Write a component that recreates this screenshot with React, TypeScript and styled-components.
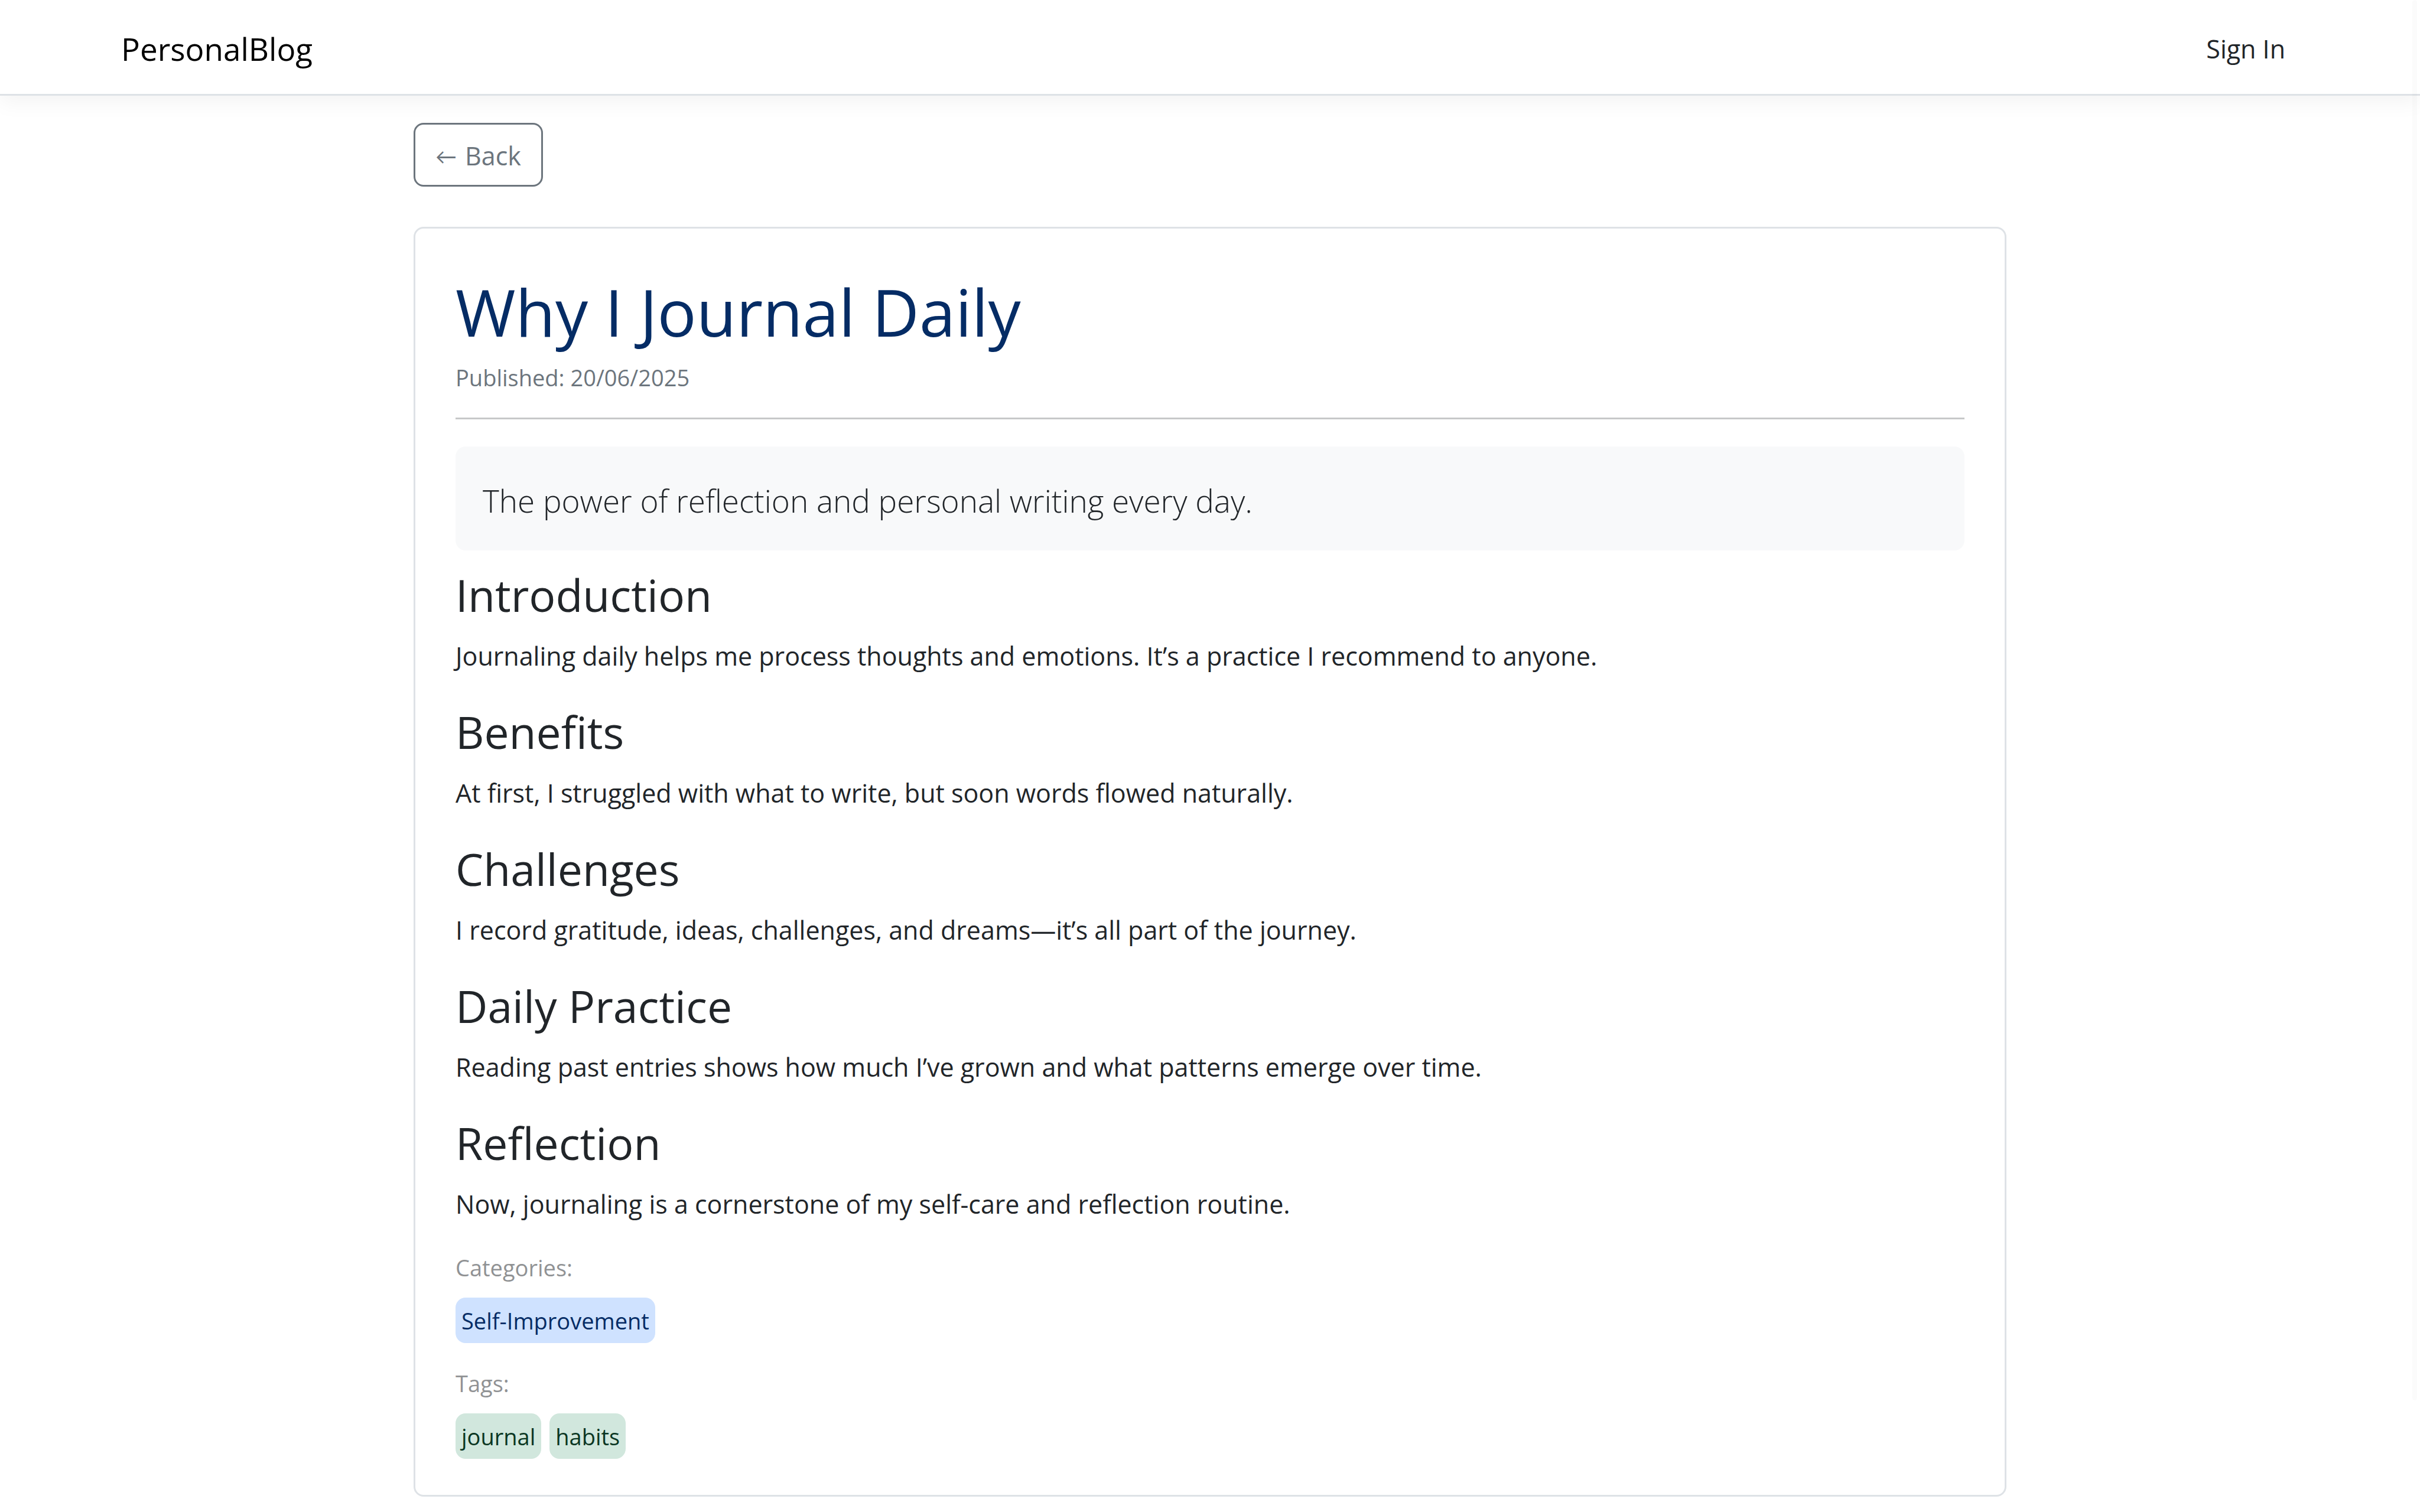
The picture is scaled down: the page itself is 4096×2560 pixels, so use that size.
import React from "react";
import styled, { createGlobalStyle } from "styled-components";

const GlobalStyle = createGlobalStyle`
  *, *::before, *::after {
    box-sizing: border-box;
  }

  body {
    margin: 0;
    background: #ffffff;
    color: #212529;
    font-family: "Open Sans", "Noto Sans", sans-serif;
    font-size: 43px;
    line-height: 68px;
  }
`;

const Header = styled.header`
  position: relative;
  background: #ffffff;
  border-bottom: 3px solid #dee2e6;
  box-shadow: 0 11px 34px rgba(0, 0, 0, 0.05);
`;

const Nav = styled.nav`
  display: flex;
  align-items: center;
  justify-content: space-between;
  max-width: 3756px;
  min-height: 159px;
  margin: 0 auto;
  padding: 6px 35px 0;
`;

const Brand = styled.a`
  color: #000000;
  font-size: 53px;
  line-height: 86px;
  text-decoration: none;
`;

const NavLink = styled.a`
  padding: 0 23px;
  color: #212529;
  text-decoration: none;
`;

const Main = styled.main`
  display: flex;
  flex-direction: column;
  align-items: flex-start;
  gap: 68px;
  width: 66%;
  max-width: 2696px;
  margin: 0 auto;
  padding: 46px 0 26px;
`;

const BackButton = styled.button`
  display: inline-flex;
  align-items: center;
  gap: 14px;
  padding: 19px 34px 15px;
  border: 3px solid #6c757d;
  border-radius: 17px;
  background: transparent;
  color: #6c757d;
  font: inherit;
  cursor: pointer;
`;

const Arrow = styled.span`
  font-family: "Lato", sans-serif;
  font-size: 36px;
`;

const Card = styled.article`
  width: 100%;
  padding: 68px 68px 61px;
  border: 3px solid #dee2e6;
  border-radius: 17px;
`;

const Title = styled.h1`
  margin: 0 0 10px;
  color: #052c65;
  font-size: 110px;
  font-weight: 400;
  line-height: 144px;
`;

const Published = styled.p`
  margin: 0;
  color: #6c757d;
  font-size: 38px;
  line-height: 60px;
`;

const Divider = styled.hr`
  height: 3px;
  margin: 38px 0 46px;
  border: 0;
  background: #c7c8c9;
`;

const Summary = styled.p`
  margin: 0 0 24px;
  padding: 49px 46px 41px;
  border-radius: 17px;
  background: #f8f9fa;
  font-size: 53px;
  font-weight: 300;
  line-height: 86px;
`;

const Section = styled.section`
  margin-bottom: 43px;
`;

const SectionTitle = styled.h2`
  margin: 0 0 19px;
  font-size: 75px;
  font-weight: 400;
  line-height: 102px;
`;

const Paragraph = styled.p`
  margin: 0;
`;

const Taxonomies = styled.footer`
  display: grid;
  gap: 38px;
`;

const Label = styled.h3`
  margin: 0 0 21px;
  color: #909294;
  font-size: 38px;
  font-weight: 400;
  line-height: 60px;
`;

const Badges = styled.ul`
  display: flex;
  flex-wrap: wrap;
  gap: 14px;
  margin: 0;
  padding: 0;
  list-style: none;
`;

const Badge = styled.li<{ $tone: "primary" | "success" }>`
  padding: 9px 10px 8px;
  border-radius: 17px;
  background: ${({ $tone }) => ($tone === "primary" ? "#cfe2ff" : "#d1e7dd")};
  color: ${({ $tone }) => ($tone === "primary" ? "#052c65" : "#0a3622")};
  font-size: 38px;
  line-height: 60px;
`;

/* Overlay scroll thumb along the right edge of the window. */
const ScrollThumb = styled.div`
  position: fixed;
  top: 0;
  right: 5px;
  width: 8px;
  height: 92.6vh;
  border-radius: 4px;
  background: rgba(0, 0, 0, 0.015);
  pointer-events: none;
`;

const sections = [
  {
    title: "Introduction",
    text: "Journaling daily helps me process thoughts and emotions. It’s a practice I recommend to anyone.",
  },
  {
    title: "Benefits",
    text: "At first, I struggled with what to write, but soon words flowed naturally.",
  },
  {
    title: "Challenges",
    text: "I record gratitude, ideas, challenges, and dreams—it’s all part of the journey.",
  },
  {
    title: "Daily Practice",
    text: "Reading past entries shows how much I’ve grown and what patterns emerge over time.",
  },
  {
    title: "Reflection",
    text: "Now, journaling is a cornerstone of my self-care and reflection routine.",
  },
];

const taxonomies = [
  { label: "Categories:", tone: "primary" as const, items: ["Self-Improvement"] },
  { label: "Tags:", tone: "success" as const, items: ["journal", "habits"] },
];

export default function App() {
  return (
    <>
      <GlobalStyle />
      <Header>
        <Nav>
          <Brand href="#">PersonalBlog</Brand>
          <NavLink href="#sign-in">Sign In</NavLink>
        </Nav>
      </Header>
      <Main>
        <BackButton type="button">
          <Arrow>←</Arrow>
          <span>Back</span>
        </BackButton>
        <Card>
          <Title>Why I Journal Daily</Title>
          <Published>Published: 20/06/2025</Published>
          <Divider />
          <Summary>The power of reflection and personal writing every day.</Summary>
          {sections.map(({ title, text }) => (
            <Section key={title}>
              <SectionTitle>{title}</SectionTitle>
              <Paragraph>{text}</Paragraph>
            </Section>
          ))}
          <Taxonomies>
            {taxonomies.map(({ label, tone, items }) => (
              <div key={label}>
                <Label>{label}</Label>
                <Badges>
                  {items.map((item) => (
                    <Badge key={item} $tone={tone}>
                      {item}
                    </Badge>
                  ))}
                </Badges>
              </div>
            ))}
          </Taxonomies>
        </Card>
      </Main>
      <ScrollThumb />
    </>
  );
}
